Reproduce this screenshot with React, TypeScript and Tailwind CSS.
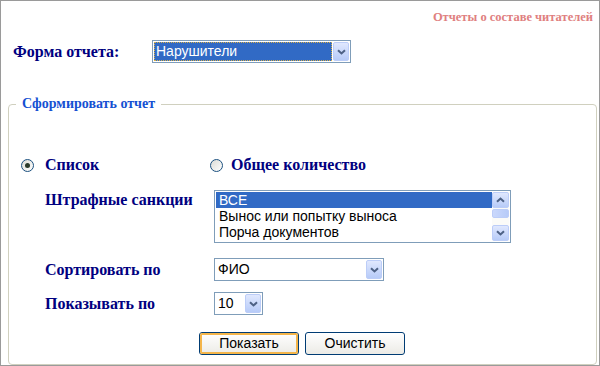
import React from "react";

const serif = "font-['Liberation_Serif',serif]";
const sans = "font-['Liberation_Sans',Arial,sans-serif]";

function Chevron({ up = false }: { up?: boolean }) {
  return (
    <svg width="9" height="6" viewBox="0 0 9 6" className={up ? "rotate-180" : ""}>
      <path d="M1 1.2 L4.5 4.5 L8 1.2" fill="none" stroke="#4d6185" strokeWidth="2" />
    </svg>
  );
}

function ArrowButton({ up = false, className = "" }: { up?: boolean; className?: string }) {
  return (
    <div
      className={`flex items-center justify-center rounded-[2px] border border-[#bccdf8] bg-linear-to-b from-[#e0e8fe] to-[#b7cbf8] ${className}`}
    >
      <Chevron up={up} />
    </div>
  );
}

function Select({
  value,
  width,
  selected = false,
}: {
  value: string;
  width: string;
  selected?: boolean;
}) {
  return (
    <div className={`flex h-[23px] border border-[#7f9db9] bg-white p-[1px] ${width}`}>
      <div
        className={`flex flex-1 items-center pl-[2px] text-[14px] ${sans} ${
          selected
            ? "bg-[#316ac5] text-white outline outline-1 outline-dotted outline-[#d7b04a] -outline-offset-1"
            : "text-black"
        }`}
      >
        {value}
      </div>
      <ArrowButton className="ml-[1px] w-[16px]" />
    </div>
  );
}

function Radio({ checked = false }: { checked?: boolean }) {
  return (
    <div className="flex h-[13px] w-[13px] items-center justify-center rounded-full border border-[#1c5180] bg-linear-to-br from-[#dcdcd6] to-white">
      {checked && <div className="h-[5px] w-[5px] rounded-full bg-[#2a3a2a]" />}
    </div>
  );
}

function XpButton({ label, focused = false }: { label: string; focused?: boolean }) {
  return (
    <div className="h-[23px] w-[100px] rounded-[3px] border border-[#003c74] bg-linear-to-b from-white to-[#ecebe6]">
      <div
        className={`flex h-full w-full items-center justify-center rounded-[2px] text-[14px] text-black ${sans} ${
          focused ? "border-2 border-[#f4b54a]" : ""
        }`}
      >
        {label}
      </div>
    </div>
  );
}

export default function App() {
  const penalties = ["ВСЕ", "Вынос или попытку выноса", "Порча документов"];
  const label = `text-[16px] font-bold leading-[20px] text-[#000080] ${serif}`;

  return (
    <div className="flex h-[366px] w-[600px] flex-col overflow-hidden border border-[#9a9a9a] bg-white">
      <div className={`pr-[6px] pt-[9px] text-right text-[12.5px] font-bold leading-[14px] text-[#e08080] ${serif}`}>
        Отчеты о составе читателей
      </div>

      <div className="mt-[16px] flex items-center pl-[12px]">
        <div className={`w-[139px] ${label}`}>Форма отчета:</div>
        <Select value="Нарушители" width="w-[199px]" selected />
      </div>

      <fieldset className="ml-[7px] mr-[2px] mt-[33px] flex-1 rounded-[4px] border border-[#d0d0bf]">
        <legend className={`ml-[7px] px-[6px] text-[14px] font-bold leading-[16px] text-[#1450d2] ${serif}`}>
          Сформировать отчет
        </legend>

        <div className="pl-[12px]">
          <div className={`mt-[43px] flex items-center ${label}`}>
            <Radio checked />
            <span className="ml-[11px] w-[165px]">Список</span>
            <Radio />
            <span className="ml-[8px]">Общее количество</span>
          </div>

          <div className="mt-[15px] flex items-start pl-[24px]">
            <div className={`w-[169px] ${label}`}>Штрафные санкции</div>
            <div className="flex h-[53px] w-[297px] border border-[#7f9db9] bg-white p-[1px]">
              <div className={`flex-1 text-[14px] leading-[16px] text-black ${sans}`}>
                {penalties.map((p, i) => (
                  <div key={p} className={`pl-[3px] ${i === 0 ? "bg-[#316ac5] text-white" : ""}`}>
                    {p}
                  </div>
                ))}
              </div>
              <div className="flex w-[17px] flex-col bg-[#fbfbf8]">
                <ArrowButton up className="h-[16px]" />
                <div className="mt-[1px] h-[9px] rounded-[2px] border border-[#bccdf8] bg-linear-to-r from-[#cad8fc] to-[#b7cbf8]" />
                <div className="flex-1" />
                <ArrowButton className="h-[16px]" />
              </div>
            </div>
          </div>

          <div className="mt-[15px] flex items-center pl-[24px]">
            <div className={`w-[169px] ${label}`}>Сортировать по</div>
            <Select value="ФИО" width="w-[170px]" />
          </div>

          <div className="mt-[11px] flex items-center pl-[24px]">
            <div className={`w-[169px] ${label}`}>Показывать по</div>
            <Select value="10" width="w-[49px]" />
          </div>

          <div className="mt-[17px] flex gap-[6px] pl-[178px]">
            <XpButton label="Показать" focused />
            <XpButton label="Очистить" />
          </div>
        </div>
      </fieldset>
    </div>
  );
}
